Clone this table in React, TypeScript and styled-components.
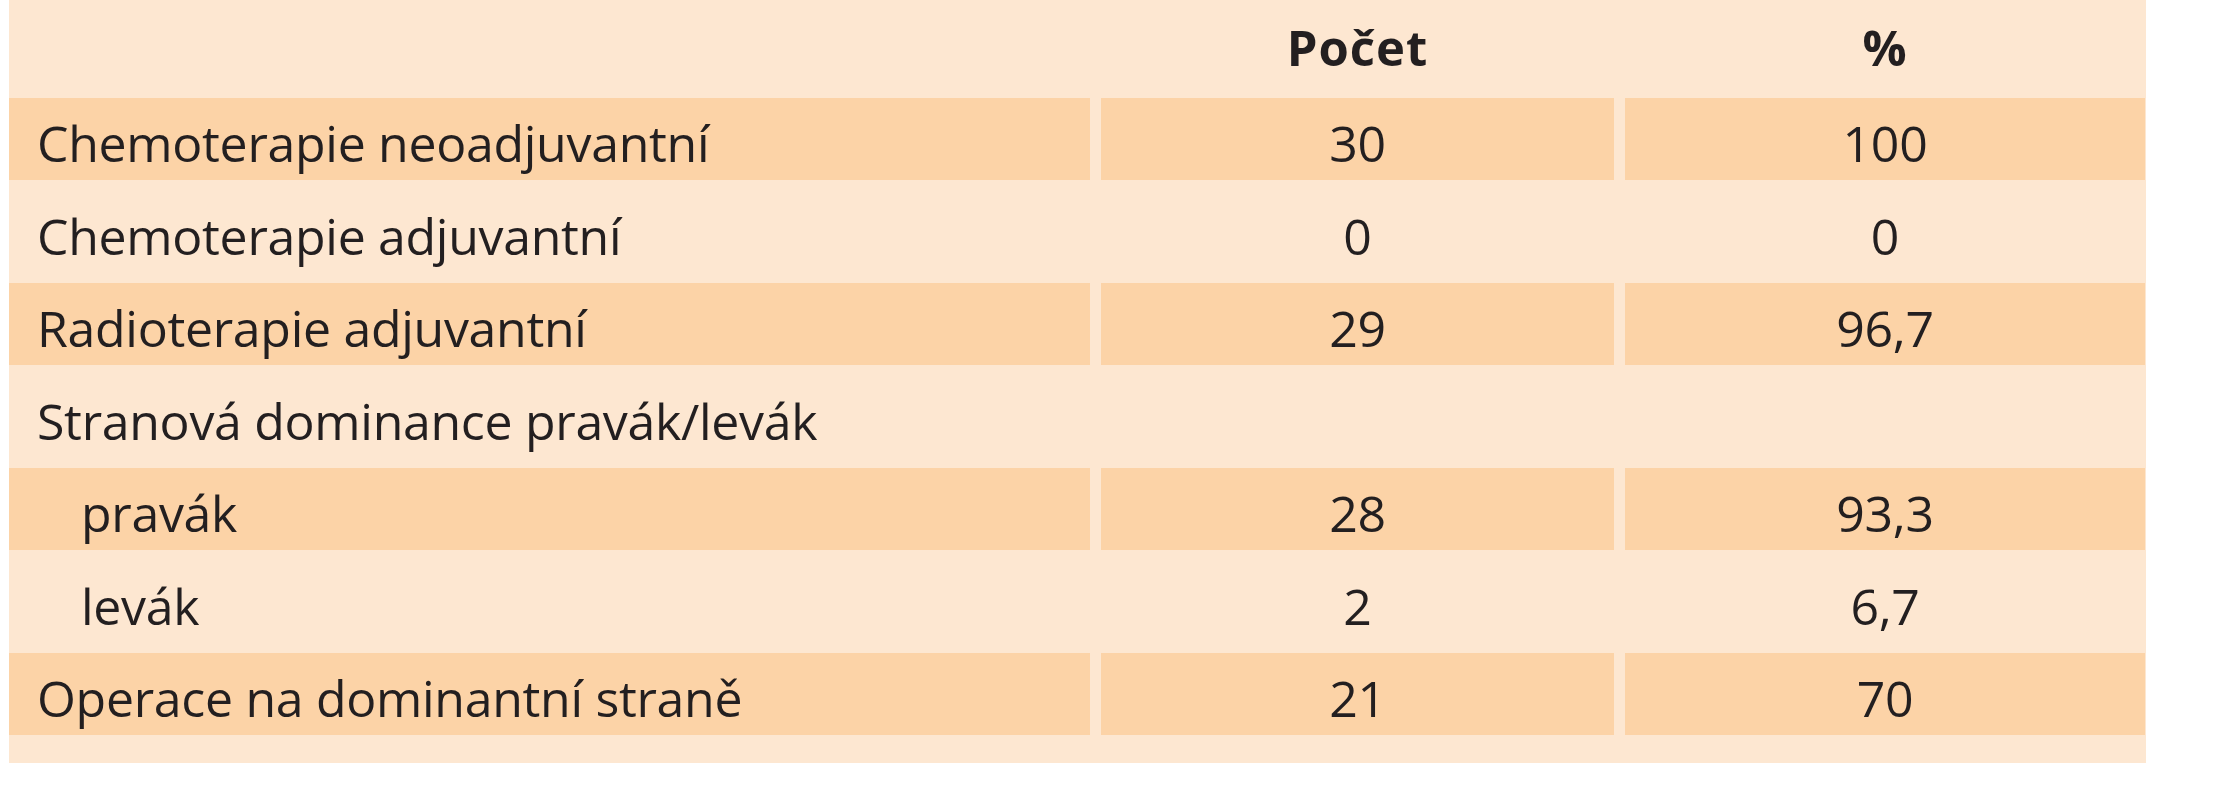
import React from 'react';
import styled, { createGlobalStyle } from 'styled-components';

const GlobalStyle = createGlobalStyle`
  html, body {
    margin: 0;
    padding: 0;
    background: #ffffff;
  }
  body {
    font-family: "Open Sans", "Noto Sans", "Liberation Sans", sans-serif;
    color: #231f20;
  }
`;

const Page = styled.div`
  padding-left: 9px;
  width: 2220px;
  height: 800px;
  box-sizing: border-box;
`;

const Panel = styled.div`
  width: 2137px;
  background: #fde7d1;
  display: grid;
  grid-template-columns: 1081px 513px 520px;
  grid-template-rows: 87px;
  grid-auto-rows: 81.5px;
  column-gap: 11px;
  row-gap: 11px;
  padding-bottom: 28px;
`;

const HeadCell = styled.div<{ $center?: boolean }>`
  display: flex;
  align-items: center;
  justify-content: ${(p) => (p.$center ? 'center' : 'flex-start')};
  font-weight: 700;
  font-size: 49px;
  letter-spacing: 1px;
  line-height: 1;
  padding-top: 8px;
  box-sizing: border-box;
`;

const Cell = styled.div<{ $shade: boolean; $center?: boolean; $indent?: boolean }>`
  display: flex;
  align-items: center;
  justify-content: ${(p) => (p.$center ? 'center' : 'flex-start')};
  padding-left: ${(p) => (p.$center ? 0 : p.$indent ? 72 : 28)}px;
  background: ${(p) => (p.$shade ? '#fcd3a7' : 'transparent')};
  font-size: 50px;
  letter-spacing: -0.3px;
  line-height: 1;
  padding-top: 9px;
  box-sizing: border-box;
  white-space: nowrap;
`;

type Row = { label: string; count: string; pct: string; indent?: boolean };

const rows: Row[] = [
  { label: 'Chemoterapie neoadjuvantní', count: '30', pct: '100' },
  { label: 'Chemoterapie adjuvantní', count: '0', pct: '0' },
  { label: 'Radioterapie adjuvantní', count: '29', pct: '96,7' },
  { label: 'Stranová dominance pravák/levák', count: '', pct: '' },
  { label: 'pravák', count: '28', pct: '93,3', indent: true },
  { label: 'levák', count: '2', pct: '6,7', indent: true },
  { label: 'Operace na dominantní straně', count: '21', pct: '70' },
];

const App = () => {
  return (
    <Page>
      <GlobalStyle />
      <Panel>
        <HeadCell />
        <HeadCell $center>Počet</HeadCell>
        <HeadCell $center>%</HeadCell>
        {rows.map((r, i) => {
          const shade = i % 2 === 0;
          return (
            <React.Fragment key={r.label}>
              <Cell $shade={shade} $indent={r.indent}>{r.label}</Cell>
              <Cell $shade={shade} $center>{r.count}</Cell>
              <Cell $shade={shade} $center>{r.pct}</Cell>
            </React.Fragment>
          );
        })}
      </Panel>
    </Page>
  );
};

export default App;
